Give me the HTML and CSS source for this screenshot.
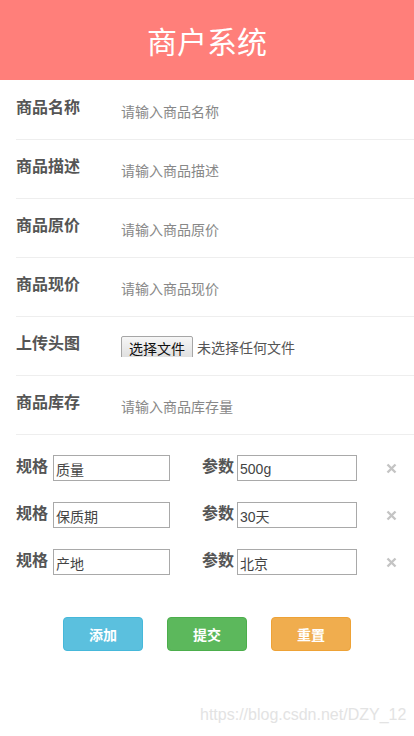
FILE: index.html
```html
<!DOCTYPE html>
<html lang="zh">
<head>
<meta charset="utf-8">
<title>商户系统</title>
<link rel="stylesheet" href="styles.css">
</head>
<body>
<header class="header">商户系统</header>
<form class="form">
  <div class="row"><span class="label">商品名称</span><input class="field" placeholder="请输入商品名称"></div>
  <div class="row"><span class="label">商品描述</span><input class="field" placeholder="请输入商品描述"></div>
  <div class="row"><span class="label">商品原价</span><input class="field" placeholder="请输入商品原价"></div>
  <div class="row"><span class="label">商品现价</span><input class="field" placeholder="请输入商品现价"></div>
  <div class="row"><span class="label">上传头图</span>
    <span class="file"><span class="file-btn">选择文件</span><span class="file-name">未选择任何文件</span></span>
  </div>
  <div class="row"><span class="label">商品库存</span><input class="field" placeholder="请输入商品库存量"></div>

  <div class="specs">
    <div class="spec">
      <span class="spec-label">规格</span><input class="spec-input" value="质量">
      <span class="spec-label param">参数</span><input class="spec-input wide" value="500g">
      <svg class="del" width="11" height="11" viewBox="0 0 11 11"><path d="M1.5 1.5L9.5 9.5M9.5 1.5L1.5 9.5"/></svg>
    </div>
    <div class="spec">
      <span class="spec-label">规格</span><input class="spec-input" value="保质期">
      <span class="spec-label param">参数</span><input class="spec-input wide" value="30天">
      <svg class="del" width="11" height="11" viewBox="0 0 11 11"><path d="M1.5 1.5L9.5 9.5M9.5 1.5L1.5 9.5"/></svg>
    </div>
    <div class="spec">
      <span class="spec-label">规格</span><input class="spec-input" value="产地">
      <span class="spec-label param">参数</span><input class="spec-input wide" value="北京">
      <svg class="del" width="11" height="11" viewBox="0 0 11 11"><path d="M1.5 1.5L9.5 9.5M9.5 1.5L1.5 9.5"/></svg>
    </div>
  </div>

  <div class="actions">
    <button type="button" class="btn btn-info">添加</button>
    <button type="button" class="btn btn-success">提交</button>
    <button type="button" class="btn btn-warning">重置</button>
  </div>
</form>
<div class="watermark">https://blog.csdn.net/DZY_12</div>
</body>
</html>
```
FILE: styles.css
```css
* { box-sizing: border-box; }
html, body {
  margin: 0;
  padding: 0;
  background: #fff;
  font-family: "Liberation Sans", "Noto Sans CJK SC", sans-serif;
}
body { position: relative; min-height: 736px; }

.header {
  height: 80px;
  line-height: 80px;
  background: #ff7f7a;
  color: #fff;
  text-align: center;
  font-size: 30px;
  font-family: "Noto Sans CJK SC", sans-serif;
}

.form { display: flex; flex-direction: column; padding-top: 1px; }

.row {
  display: flex;
  align-items: flex-start;
  height: 59px;
  margin-left: 16px;
  border-bottom: 1px solid #eeeeee;
}
.label {
  width: 105px;
  flex: none;
  margin-top: 14px;
  font-size: 16px;
  line-height: 22px;
  font-weight: bold;
  color: #555;
  font-family: "Noto Sans CJK SC", sans-serif;
}
.field {
  margin-top: 20px;
  height: 20px;
  line-height: 20px;
  border: none;
  padding: 0;
  outline: none;
  font-size: 14px;
  color: #555;
  font-family: "Noto Sans CJK SC", sans-serif;
  width: 250px;
  background: transparent;
}
.field::placeholder { color: #888; }

.file {
  display: flex;
  align-items: flex-start;
  margin-top: 19px;
  height: 21px;
  overflow: hidden;
  font-size: 14px;
  font-family: "Noto Sans CJK SC", sans-serif;
}
.file-btn {
  height: 24px;
  line-height: 20px;
  padding: 1px 7px 0;
  border: 1px solid #a6a6a6;
  border-radius: 2px;
  background: linear-gradient(#f6f6f6, #dedede);
  color: #111;
}
.file-name {
  margin-left: 4px;
  line-height: 22px;
  color: #555;
}

.specs {
  display: flex;
  flex-direction: column;
  gap: 21px;
  padding: 20px 0 0 16px;
}
.spec {
  display: flex;
  align-items: flex-start;
  height: 26px;
}
.spec-label {
  font-size: 16px;
  line-height: 22px;
  margin-top: -1px;
  font-weight: bold;
  color: #555;
  font-family: "Noto Sans CJK SC", sans-serif;
  margin-right: 5px;
}
.spec-label.param { margin-left: 32px; margin-right: 3px; }
.spec-input {
  width: 117px;
  height: 26px;
  border: 1px solid #a9a9a9;
  padding: 2px 2px 0;
  font-size: 14px;
  color: #444;
  font-family: "Liberation Sans", "Noto Sans CJK SC", sans-serif;
  outline: none;
}
.spec-input.wide { width: 120px; }
.del {
  align-self: center;
  margin-left: 29px;
  stroke: #c4c4c4;
  stroke-width: 2.4;
  fill: none;
}

.actions {
  display: flex;
  gap: 24px;
  margin-top: 42px;
  padding-left: 63px;
}
.btn {
  width: 80px;
  height: 34px;
  border-radius: 4px;
  border: 1px solid;
  color: #fff;
  font-size: 14px;
  font-weight: bold;
  font-family: "Noto Sans CJK SC", sans-serif;
  padding: 0;
}
.btn-info { background: #5bc0de; border-color: #46b8da; }
.btn-success { background: #5cb85c; border-color: #4cae4c; }
.btn-warning { background: #f0ad4e; border-color: #eea236; }

.watermark {
  position: absolute;
  left: 200px;
  top: 706px;
  font-size: 16px;
  color: #e3e3e3;
  font-family: "Liberation Sans", sans-serif;
  white-space: nowrap;
}
```
